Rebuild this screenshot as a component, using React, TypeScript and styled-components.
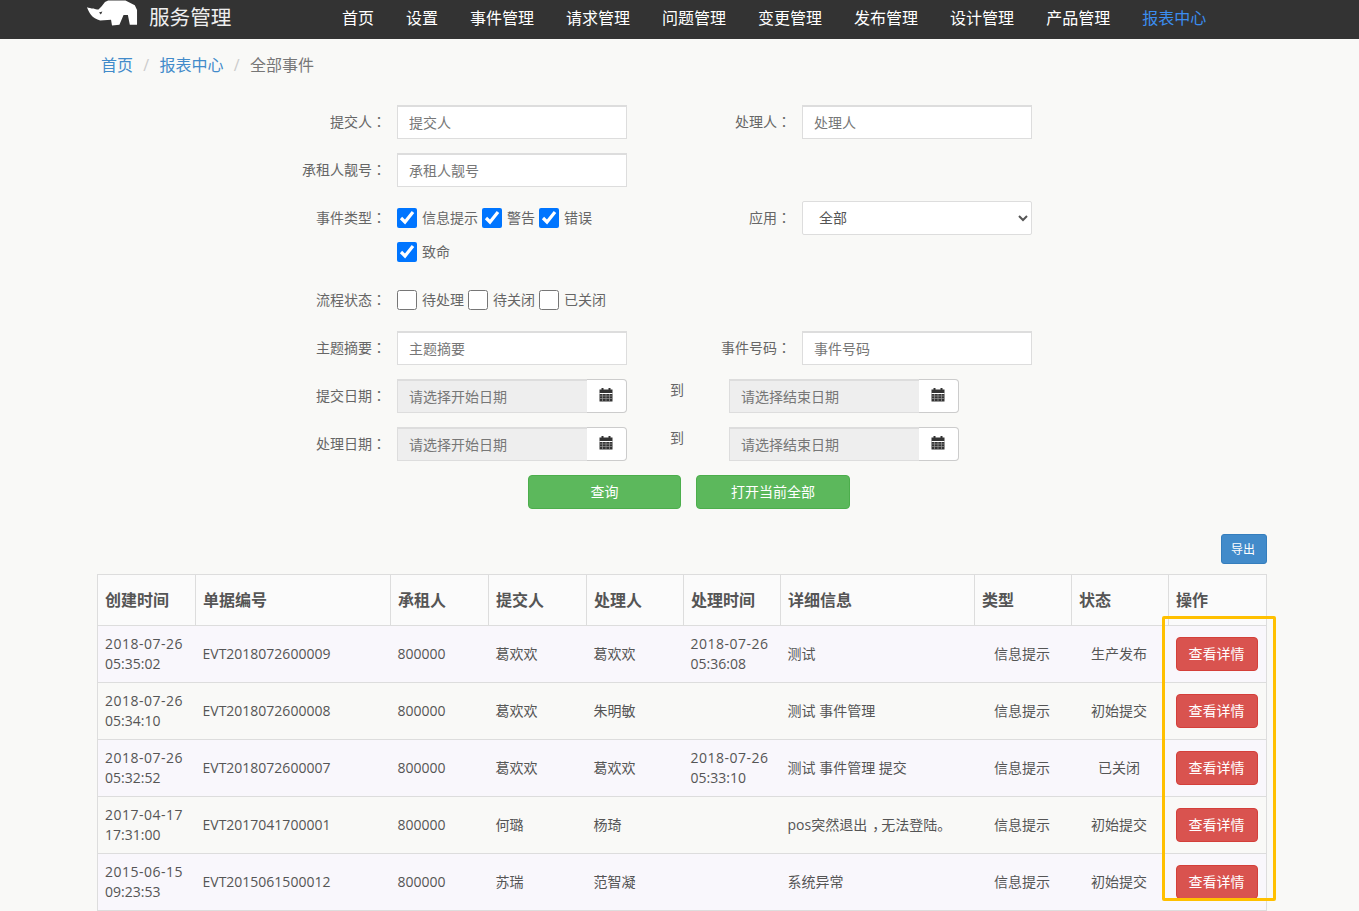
import React from 'react';
import styled, { createGlobalStyle } from 'styled-components';

const GlobalStyle = createGlobalStyle`
  html, body {
    margin: 0;
    padding: 0;
    background: #f9f9f7;
    color: #555;
    font-family: "Open Sans", "Noto Sans CJK SC", sans-serif;
    font-size: 14px;
    overflow: hidden;
  }
  * { box-sizing: border-box; }
`;

const Page = styled.div`
  height: 911px;
  overflow: hidden;
  position: relative;
`;

const NavBar = styled.div`
  height: 39px;
  background: #333;
  display: flex;
  align-items: center;
  padding-left: 86px;
  overflow: hidden;
`;

const Brand = styled.div`
  display: flex;
  align-items: center;
  width: 256px;
  color: #eee;
  font-size: 20.6px;
  line-height: 28px;
  gap: 11px;
`;

const BrandName = styled.span`
  margin-top: -6px;
  white-space: nowrap;
`;

const Logo = styled.svg`
  width: 52px;
  height: 26px;
  margin-top: -13px;
  flex: none;
`;

const NavList = styled.div`
  display: flex;
  gap: 32px;
`;

const NavItem = styled.a<{ $active?: boolean }>`
  color: ${(p) => (p.$active ? '#3b8df0' : '#fff')};
  font-size: 16px;
  line-height: 37px;
  height: 39px;
  white-space: nowrap;
`;

const Crumbs = styled.div`
  display: flex;
  padding: 15px 0 0 101px;
  height: 66px;
  font-size: 16px;
  line-height: 22px;
  color: #777;
`;

const CrumbLink = styled.a`
  color: #428bca;
`;

const CrumbSep = styled.span`
  color: #ccc;
  width: 26.5px;
  text-align: center;
`;

const Form = styled.div`
  margin-left: 97px;
  width: 1170px;
`;

const Row = styled.div<{ $h?: number }>`
  display: flex;
  height: ${(p) => p.$h ?? 48}px;
`;

const Label = styled.div<{ $w: number }>`
  width: ${(p) => p.$w}px;
  text-align: right;
  height: 34px;
  line-height: 32px;
  padding-right: 11px;
  font-size: 14px;
  color: #666;
  white-space: nowrap;
  flex: none;
`;

/* the reference draws the label colon centred in its box */
const Punct = styled.span`
  font-family: "Noto Sans CJK TC", sans-serif;
`;

const Comma = styled.span`
  padding-left: 5px;
  letter-spacing: -5px;
`;

const Input = styled.input`
  width: 230px;
  height: 34px;
  background: #fff;
  border: 1px solid #ddd;
  border-top-width: 2px;
  border-radius: 0;
  padding: 0 0 0 11px;
  font: inherit;
  color: #555;
  flex: none;
  outline: 0;
  &::placeholder { color: #777; opacity: 1; }
`;

const Select = styled.select`
  width: 230px;
  height: 34px;
  background: #fff;
  border: 1px solid #ddd;
  border-radius: 2px;
  padding: 0 0 2px 12px;
  font: inherit;
  color: #555;
  flex: none;
`;

const ChecksBlock = styled.div`
  width: 230px;
  display: flex;
  flex-wrap: wrap;
  align-content: flex-start;
  row-gap: 14px;
  padding-top: 7px;
  flex: none;
`;

const Check = styled.label`
  display: flex;
  align-items: center;
  height: 20px;
  line-height: 18px;
  margin-right: 4px;
  font-size: 14px;
  color: #666;
  white-space: nowrap;
`;

const Box = styled.input.attrs({ type: 'checkbox' })`
  width: 20px;
  height: 20px;
  margin: 0 5px 0 0;
`;

const DateGroup = styled.div`
  display: flex;
  width: 230px;
  height: 34px;
  flex: none;
`;

const DateInput = styled.input`
  width: 190px;
  background: #eee;
  border: 1px solid #ddd;
  border-top-width: 2px;
  border-right: none;
  border-radius: 0;
  padding: 0 0 0 11px;
  font: inherit;
  outline: 0;
  &::placeholder { color: #777; opacity: 1; }
`;

const DateAddon = styled.div`
  width: 40px;
  background: #fff;
  border: 1px solid #ccc;
  border-left: none;
  border-radius: 0 4px 4px 0;
  display: flex;
  align-items: center;
  justify-content: center;
  padding: 0 2px 2px 0;
`;

const To = styled.div`
  width: 102px;
  padding: 1px 0 0 43px;
  line-height: 20px;
  color: #666;
  flex: none;
`;

const Buttons = styled.div`
  display: flex;
  padding-left: 431px;
  gap: 15px;
  height: 59px;
`;

const GreenBtn = styled.button<{ $w: number }>`
  width: ${(p) => p.$w}px;
  height: 34px;
  background: #5cb85c;
  border: 1px solid #4cae4c;
  border-radius: 4px;
  color: #fff;
  font: inherit;
  padding: 0 0 2px;
`;

const ExportRow = styled.div`
  display: flex;
  justify-content: flex-end;
  margin: 0 92px 0 0;
  height: 40px;
`;

const ExportBtn = styled.button`
  width: 46px;
  height: 30px;
  background: #428bca;
  border: 1px solid #357ebd;
  border-radius: 3px;
  color: #fff;
  font-size: 12px;
  padding: 0 2px 0 0;
  font-family: inherit;
`;

const Table = styled.table`
  margin-left: 97px;
  width: 1169px;
  border-collapse: collapse;
  table-layout: fixed;
`;

const Th = styled.th`
  height: 51px;
  border: 1px solid #ddd;
  text-align: left;
  padding: 0 7px 2px;
  font-size: 16px;
  font-weight: 700;
  color: #555;
  background: #fbfbfb;
`;

const Tr = styled.tr<{ $odd: boolean }>`
  background: ${(p) => (p.$odd ? '#f9f7fc' : '#f9f9f7')};
`;

const Td = styled.td<{ $center?: boolean }>`
  height: 57px;
  padding: ${(p) => (p.$center ? '0 9px 0 7px' : '0 7px')};
  border-top: 1px solid #ddd;
  border-bottom: 1px solid #ddd;
  font-size: 14px;
  line-height: 20px;
  color: #555;
  text-align: ${(p) => (p.$center ? 'center' : 'left')};
  &:first-child { border-left: 1px solid #ddd; }
  &:last-child { border-right: 1px solid #ddd; }
`;

const DayText = styled.span`
  letter-spacing: 0.5px;
`;

const RedBtn = styled.button`
  display: block;
  width: 82px;
  height: 34px;
  background: #d9534f;
  border: 1px solid #d43f3a;
  border-radius: 4px;
  color: #fff;
  font: inherit;
  padding: 0;
`;

const Highlight = styled.div`
  position: absolute;
  left: 1162px;
  top: 616px;
  width: 114px;
  height: 285px;
  border: 3px solid #ffc000;
  border-radius: 2px;
  pointer-events: none;
`;

const CalendarIcon = () => (
  <svg width="14" height="14" viewBox="0 0 14 14">
    <rect x="2.5" y="0" width="2" height="2" fill="#333" />
    <rect x="9.5" y="0" width="2" height="2" fill="#333" />
    <rect x="0.5" y="1.5" width="13" height="12" fill="#333" />
    <path d="M0.5 5.5 H13.5" stroke="#fff" strokeWidth="1" />
    <path d="M0.5 8 H13.5 M0.5 10.5 H13.5 M3.5 6 V13 M7 6 V13 M10.5 6 V13" stroke="#999" strokeWidth="0.7" />
  </svg>
);

const DateField = ({ placeholder }: { placeholder: string }) => (
  <DateGroup>
    <DateInput readOnly placeholder={placeholder} />
    <DateAddon><CalendarIcon /></DateAddon>
  </DateGroup>
);

const Colon = () => <Punct>：</Punct>;

const navItems = ['首页', '设置', '事件管理', '请求管理', '问题管理', '变更管理', '发布管理', '设计管理', '产品管理'];

const rows: { day: string; time: string; no: string; tenant: string; by: string; handler: string; hDay: string; hTime: string; info: React.ReactNode; status: string }[] = [
  { day: '2018-07-26', time: '05:35:02', no: 'EVT2018072600009', tenant: '800000', by: '葛欢欢', handler: '葛欢欢', hDay: '2018-07-26', hTime: '05:36:08', info: '测试', status: '生产发布' },
  { day: '2018-07-26', time: '05:34:10', no: 'EVT2018072600008', tenant: '800000', by: '葛欢欢', handler: '朱明敏', hDay: '', hTime: '', info: '测试 事件管理', status: '初始提交' },
  { day: '2018-07-26', time: '05:32:52', no: 'EVT2018072600007', tenant: '800000', by: '葛欢欢', handler: '葛欢欢', hDay: '2018-07-26', hTime: '05:33:10', info: '测试 事件管理 提交', status: '已关闭' },
  { day: '2017-04-17', time: '17:31:00', no: 'EVT2017041700001', tenant: '800000', by: '何璐', handler: '杨琦', hDay: '', hTime: '', info: <>pos突然退出<Comma>，</Comma>无法登陆。</>, status: '初始提交' },
  { day: '2015-06-15', time: '09:23:53', no: 'EVT2015061500012', tenant: '800000', by: '苏瑞', handler: '范智凝', hDay: '', hTime: '', info: '系统异常', status: '初始提交' },
];

const columns = [98, 195, 98, 98, 97, 97, 194, 97, 97, 98];
const headers = ['创建时间', '单据编号', '承租人', '提交人', '处理人', '处理时间', '详细信息', '类型', '状态', '操作'];

export default function App() {
  return (
    <Page>
      <GlobalStyle />
      <NavBar>
        <Brand>
          <Logo viewBox="0 0 54 26">
            <path
              fill="#fff"
              fillRule="evenodd"
              d="M1 7 C3 7.5 6 8.5 8 8.3 C10 9 11.5 9.5 13 9.3 L16.3 6 L19.7 1.7 L23 0 L41 0 L50.7 5 L53 10 L53 25.3 L45.5 25.3 L43.5 15 L39 15 L34.7 25.3 L27 26 L26 20 L14.7 20.7 C11 19.5 7 17.5 5.3 15 C3.5 12.5 2 10 1 7 Z M13.5 12.5 L17 11.5 L15.5 14.5 Z"
            />
          </Logo>
          <BrandName>服务管理</BrandName>
        </Brand>
        <NavList>
          {navItems.map((n) => (
            <NavItem key={n}>{n}</NavItem>
          ))}
          <NavItem $active>报表中心</NavItem>
        </NavList>
      </NavBar>

      <Crumbs>
        <CrumbLink>首页</CrumbLink>
        <CrumbSep>/</CrumbSep>
        <CrumbLink>报表中心</CrumbLink>
        <CrumbSep>/</CrumbSep>
        <span>全部事件</span>
      </Crumbs>

      <Form>
        <Row>
          <Label $w={300}>提交人<Colon /></Label>
          <Input placeholder="提交人" />
          <Label $w={175}>处理人<Colon /></Label>
          <Input placeholder="处理人" />
        </Row>
        <Row>
          <Label $w={300}>承租人靓号<Colon /></Label>
          <Input placeholder="承租人靓号" />
        </Row>
        <Row $h={82}>
          <Label $w={300}>事件类型<Colon /></Label>
          <ChecksBlock>
            <Check><Box defaultChecked />信息提示</Check>
            <Check><Box defaultChecked />警告</Check>
            <Check><Box defaultChecked />错误</Check>
            <Check><Box defaultChecked />致命</Check>
          </ChecksBlock>
          <Label $w={175}>应用<Colon /></Label>
          <Select defaultValue="全部">
            <option>全部</option>
          </Select>
        </Row>
        <Row>
          <Label $w={300}>流程状态<Colon /></Label>
          <ChecksBlock>
            <Check><Box />待处理</Check>
            <Check><Box />待关闭</Check>
            <Check><Box />已关闭</Check>
          </ChecksBlock>
        </Row>
        <Row>
          <Label $w={300}>主题摘要<Colon /></Label>
          <Input placeholder="主题摘要" />
          <Label $w={175}>事件号码<Colon /></Label>
          <Input placeholder="事件号码" />
        </Row>
        <Row>
          <Label $w={300}>提交日期<Colon /></Label>
          <DateField placeholder="请选择开始日期" />
          <To>到</To>
          <DateField placeholder="请选择结束日期" />
        </Row>
        <Row>
          <Label $w={300}>处理日期<Colon /></Label>
          <DateField placeholder="请选择开始日期" />
          <To>到</To>
          <DateField placeholder="请选择结束日期" />
        </Row>
        <Buttons>
          <GreenBtn $w={153}>查询</GreenBtn>
          <GreenBtn $w={154}>打开当前全部</GreenBtn>
        </Buttons>
      </Form>

      <ExportRow>
        <ExportBtn>导出</ExportBtn>
      </ExportRow>

      <Table>
        <colgroup>
          {columns.map((w, i) => (
            <col key={i} style={{ width: w }} />
          ))}
        </colgroup>
        <thead>
          <tr>
            {headers.map((h) => (
              <Th key={h}>{h}</Th>
            ))}
          </tr>
        </thead>
        <tbody>
          {rows.map((r, i) => (
            <Tr key={r.no} $odd={i % 2 === 0}>
              <Td><DayText>{r.day}</DayText><br />{r.time}</Td>
              <Td>{r.no}</Td>
              <Td>{r.tenant}</Td>
              <Td>{r.by}</Td>
              <Td>{r.handler}</Td>
              <Td><DayText>{r.hDay}</DayText>{r.hDay && <br />}{r.hTime}</Td>
              <Td>{r.info}</Td>
              <Td $center>信息提示</Td>
              <Td $center>{r.status}</Td>
              <Td><RedBtn>查看详情</RedBtn></Td>
            </Tr>
          ))}
        </tbody>
      </Table>

      <Highlight />
    </Page>
  );
}
